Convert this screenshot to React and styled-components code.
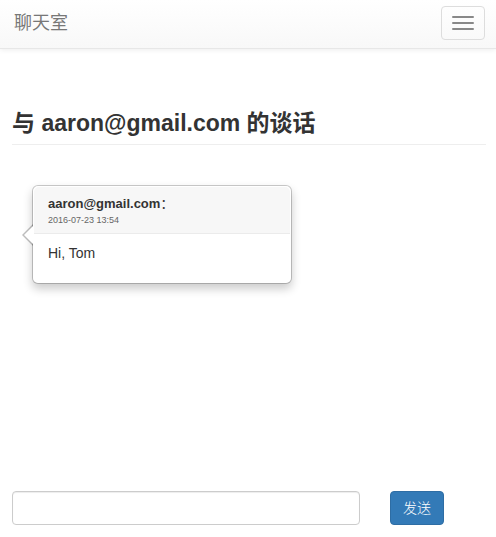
import React, { useState } from "react";
import styled, { createGlobalStyle } from "styled-components";

const GlobalStyle = createGlobalStyle`
  *, *::before, *::after { box-sizing: border-box; }
  html, body, #root { height: 100%; }
  body {
    margin: 0;
    background: #fff;
    color: #333;
    font-family: "Liberation Sans", "Noto Sans CJK SC", sans-serif;
    font-size: 14px;
    line-height: 20px;
  }
  button, input { font: inherit; }
`;

const Page = styled.div`
  display: flex;
  flex-direction: column;
  min-height: 100%;
`;

const Navbar = styled.nav`
  display: flex;
  align-items: center;
  justify-content: space-between;
  height: 49px;
  padding: 0 11px 2px 14px;
  background: linear-gradient(to bottom, #fff 0%, #f8f8f8 100%);
  border-bottom: 1px solid #e7e7e7;
  box-shadow: 0 1px 5px rgba(0, 0, 0, 0.075);
`;

const Brand = styled.a`
  color: #777;
  font-size: 18px;
  text-decoration: none;
`;

const Toggle = styled.button`
  display: flex;
  flex-direction: column;
  gap: 4px;
  padding: 9px 10px;
  border: 1px solid #ddd;
  border-radius: 4px;
  background: transparent;
  cursor: pointer;
`;

const Bar = styled.span`
  width: 22px;
  height: 2px;
  border-radius: 1px;
  background: #888;
`;

const Main = styled.main`
  flex: 1;
  padding: 60px 10px 20px 12px;
`;

const Title = styled.h3`
  margin: 0 0 40px;
  padding-bottom: 6px;
  border-bottom: 1px solid #eee;
  font-size: 23px;
  font-weight: 700;
  line-height: 29px;
`;

const Popover = styled.article`
  position: relative;
  width: 260px;
  max-width: 100%;
  margin-left: 20px;
  padding: 1px;
  border: 1px solid rgba(0, 0, 0, 0.2);
  border-radius: 6px;
  background: #fff;
  background-clip: padding-box;
  box-shadow: 0 5px 10px rgba(0, 0, 0, 0.2);

  &::before,
  &::after {
    content: "";
    position: absolute;
    top: 50%;
    border: solid transparent;
  }
  &::before {
    left: -11px;
    margin-top: -11px;
    border-width: 11px 11px 11px 0;
    border-right-color: rgba(0, 0, 0, 0.25);
  }
  &::after {
    left: -9px;
    margin-top: -10px;
    border-width: 10px 10px 10px 0;
    border-right-color: #fff;
  }
`;

const PopoverHeader = styled.header`
  padding: 8px 14px 6px;
  border-bottom: 1px solid #ebebeb;
  border-radius: 5px 5px 0 0;
  background: #f7f7f7;
`;

const Sender = styled.div`
  font-size: 13px;
  line-height: 18px;
`;

const Time = styled.time`
  display: block;
  color: #666;
  font-size: 9px;
  line-height: 14px;
`;

const PopoverBody = styled.p`
  margin: 0;
  padding: 9px 14px 19px;
`;

const Composer = styled.form`
  display: grid;
  grid-template-columns: repeat(12, minmax(0, 1fr));
  column-gap: 30px;
  padding: 0 10px 12px 12px;
`;

const MessageInput = styled.input`
  grid-column: span 9;
  width: 100%;
  height: 34px;
  padding: 6px 12px;
  border: 1px solid #ccc;
  border-radius: 4px;
  background: #fff;
  color: #555;
  box-shadow: inset 0 1px 1px rgba(0, 0, 0, 0.075);
`;

const SendButton = styled.button`
  grid-column: span 3;
  justify-self: start;
  height: 34px;
  padding: 0 12px;
  border: 1px solid #2e6da4;
  border-radius: 4px;
  background: #337ab7;
  color: #fff;
  font-weight: 300;
  white-space: nowrap;
  cursor: pointer;
`;

export default function App() {
  const [message, setMessage] = useState("");
  return (
    <Page>
      <GlobalStyle />
      <Navbar>
        <Brand href="#">聊天室</Brand>
        <Toggle type="button" aria-label="菜单">
          <Bar />
          <Bar />
          <Bar />
        </Toggle>
      </Navbar>
      <Main>
        <Title>与 aaron@gmail.com 的谈话</Title>
        <Popover>
          <PopoverHeader>
            <Sender>
              <strong>aaron@gmail.com</strong>：
            </Sender>
            <Time dateTime="2016-07-23T13:54">2016-07-23 13:54</Time>
          </PopoverHeader>
          <PopoverBody>Hi, Tom</PopoverBody>
        </Popover>
      </Main>
      <Composer onSubmit={(e) => e.preventDefault()}>
        <MessageInput
          type="text"
          aria-label="消息"
          value={message}
          onChange={(e) => setMessage(e.target.value)}
        />
        <SendButton type="submit">发送</SendButton>
      </Composer>
    </Page>
  );
}
